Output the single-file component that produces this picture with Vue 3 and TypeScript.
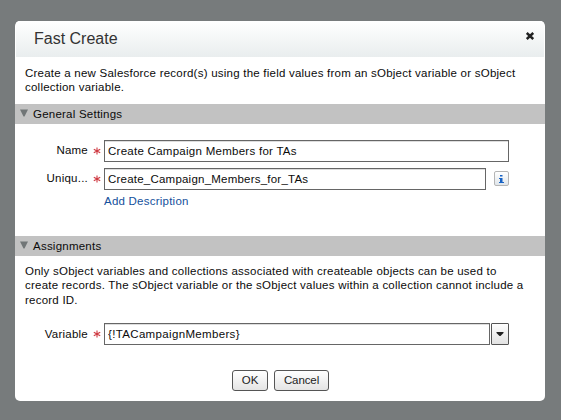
<script setup lang="ts">
import { ref } from 'vue'

const recordName = ref('Create Campaign Members for TAs')
const uniqueName = ref('Create_Campaign_Members_for_TAs')
const variable = ref('{!TACampaignMembers}')

const intro: string[] = [
  'Create a new Salesforce record(s) using the field values from an sObject variable or sObject',
  'collection variable.',
]
const help: string[] = [
  'Only sObject variables and collections associated with createable objects can be used to',
  'create records. The sObject variable or the sObject values within a collection cannot include a',
  'record ID.',
]
</script>

<template>
  <main class="backdrop">
    <section class="dialog">
      <header class="head">
        <h1 class="title">Fast Create</h1>
        <svg class="close" width="8" height="8" viewBox="0 0 8 8">
          <path d="M0.8 1L7.2 7M7.2 1L0.8 7" stroke="#222" stroke-width="2.4" />
        </svg>
      </header>

      <p class="copy intro"><span v-for="line in intro" :key="line">{{ line }}</span></p>

      <h2 class="bar">
        <svg class="tri" width="8" height="8" viewBox="0 0 8 8"><path d="M0 0.5H8L4.5 7.5H3.5Z" /></svg>
        <span>General Settings</span>
      </h2>

      <div class="fields">
        <div class="row">
          <label class="label">Name</label>
          <svg class="req" viewBox="0 0 8 8"><path d="M4 0.5V7.5M0.8 2.2L7.2 5.8M7.2 2.2L0.8 5.8" /></svg>
          <input v-model="recordName" class="input wide" type="text" />
        </div>
        <div class="row second">
          <label class="label">Uniqu...</label>
          <svg class="req" viewBox="0 0 8 8"><path d="M4 0.5V7.5M0.8 2.2L7.2 5.8M7.2 2.2L0.8 5.8" /></svg>
          <input v-model="uniqueName" class="input unique" type="text" />
          <button class="info" type="button">
            <svg width="5" height="8" viewBox="0 0 5 8"><path d="M1 0H3.5V1.5H1ZM0 3H3.5V7H5V8H0V7H1V4H0Z" /></svg>
          </button>
        </div>
        <a class="link">Add Description</a>
      </div>

      <h2 class="bar">
        <svg class="tri" width="8" height="8" viewBox="0 0 8 8"><path d="M0 0.5H8L4.5 7.5H3.5Z" /></svg>
        <span>Assignments</span>
      </h2>

      <p class="copy help"><span v-for="line in help" :key="line">{{ line }}</span></p>

      <div class="row variable">
        <label class="label">Variable</label>
        <svg class="req" viewBox="0 0 8 8"><path d="M4 0.5V7.5M0.8 2.2L7.2 5.8M7.2 2.2L0.8 5.8" /></svg>
        <input v-model="variable" class="input combo" type="text" />
        <button class="drop" type="button">
          <svg width="8" height="4" viewBox="0 0 8 4"><path d="M0.5 0H7.5V1L4.5 4H3.5L0.5 1Z" /></svg>
        </button>
      </div>

      <footer class="actions">
        <button class="btn ok" type="button">OK</button>
        <button class="btn cancel" type="button">Cancel</button>
      </footer>
    </section>
  </main>
</template>

<style>
body {
  background: #777b7c;
}
</style>

<style scoped>
.backdrop {
  box-sizing: border-box;
  height: 420px;
  padding: 21px 16px 0 15px;
  background: #777b7c;
  font-family: "Liberation Sans", Arial, sans-serif;
  font-size: 11.5px;
  letter-spacing: 0.23px;
  color: #0b0b0b;
}
.backdrop * {
  box-sizing: border-box;
}
.dialog {
  height: 380px;
  border-radius: 5px;
  background: #fff;
  overflow: hidden;
}
.head {
  display: flex;
  justify-content: space-between;
  height: 36px;
  margin: 0 1px;
  padding: 0 10px 0 18px;
  background: linear-gradient(#fff, #e9edee);
}
.title {
  margin: 0;
  font-size: 16px;
  font-weight: 400;
  line-height: 35px;
  letter-spacing: 0;
  color: #333;
}
.close {
  margin-top: 11px;
}
.copy {
  margin: 0;
  padding-left: 10px;
  line-height: 14.4px;
  white-space: nowrap;
}
.copy span {
  display: block;
}
.intro {
  height: 47px;
  padding-top: 9px;
}
.bar {
  display: flex;
  height: 20px;
  margin: 0;
  padding-left: 5px;
  background: #c2c2c2;
  font-size: 11.5px;
  font-weight: 400;
  line-height: 20px;
}
.tri {
  margin: 5px 5px 0 0;
  fill: #717677;
}
.fields {
  height: 112px;
  padding-top: 16px;
}
.row {
  display: flex;
  height: 22px;
}
.second {
  margin-top: 6px;
}
.label {
  width: 73px;
  text-align: right;
  line-height: 20px;
}
.req {
  width: 8px;
  height: 8px;
  margin: 7px 3px 0 5px;
  fill: none;
  stroke: #cf3a42;
  stroke-width: 1.1;
}
.variable .label {
  line-height: 22px;
}
.input {
  height: 22px;
  padding: 0 3px;
  border: 1px solid #666;
  border-radius: 0;
  outline: none;
  background: #fff;
  box-shadow: inset 0 1px 0 #ddd;
  font: inherit;
  letter-spacing: 0.27px;
  color: #0b0b0b;
}
.wide {
  width: 405px;
}
.unique {
  width: 382px;
  letter-spacing: 0.22px;
}
.combo {
  width: 386px;
  letter-spacing: 0.34px;
}
.info {
  display: flex;
  align-items: center;
  justify-content: center;
  width: 15px;
  height: 15px;
  margin: 3px 0 0 8px;
  padding: 0;
  border: 1px solid #b5b5b5;
  border-radius: 2px;
  background: linear-gradient(#fff, #dfe5ea);
}
.info svg {
  fill: #1762c5;
}
.link {
  display: block;
  width: 100px;
  margin-left: 89px;
  padding-top: 4px;
  line-height: 14px;
  color: #14509c;
}
.help {
  height: 67px;
  padding-top: 8px;
}
.drop {
  display: flex;
  align-items: center;
  justify-content: center;
  width: 18px;
  height: 22px;
  margin-left: 1px;
  padding: 0;
  border: 1px solid #555;
  border-radius: 1px;
  background: linear-gradient(#fff, #e2e2e2);
}
.drop svg {
  fill: #222;
}
.actions {
  display: flex;
  gap: 6px;
  padding: 25px 0 0 217px;
}
.btn {
  height: 21px;
  padding: 0;
  border: 1px solid #555;
  border-radius: 3px;
  background: linear-gradient(#fff, #e4e4e4);
  font: inherit;
  font-size: 11.5px;
  line-height: 19px;
  letter-spacing: -0.1px;
  color: #222;
}
.ok {
  width: 36px;
}
.cancel {
  width: 55px;
}
</style>
